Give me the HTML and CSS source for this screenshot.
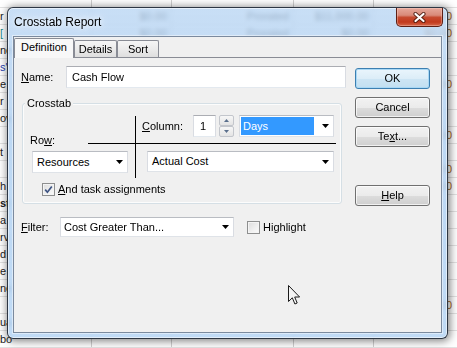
FILE: index.html
```html
<!DOCTYPE html>
<html>
<head>
<meta charset="utf-8">
<title>Crosstab Report</title>
<link rel="stylesheet" href="styles.css">
</head>
<body>
<div class="desktop">
  <div class="sheet">
    <div class="srow head"><span class="c ca"></span><span class="c cb"></span><span class="c cc"></span><span class="c cd"></span><span class="c ce"></span><span class="c cf"></span></div>
    <div class="srow"><span class="c ca">r</span><span class="c cb"></span><span class="c cc">$0.00</span><span class="c cd">Prorated</span><span class="c ce">$11,000.00</span><span class="c cf">$0.00</span></div>
    <div class="srow"><span class="c ca teal">[</span><span class="c cb"></span><span class="c cc">$0.00</span><span class="c cd">Prorated</span><span class="c ce">$0.00</span><span class="c cf">$0.00</span></div>
    <div class="srow"><span class="c ca">ne</span><span class="c cb"></span><span class="c cc">$0.00</span><span class="c cd">Prorated</span><span class="c ce">$0.00</span><span class="c cf"></span></div>
    <div class="srow"><span class="c ca blue">s"</span><span class="c cb"></span><span class="c cc">$0.00</span><span class="c cd">Prorated</span><span class="c ce">$0.00</span><span class="c cf"></span></div>
    <div class="srow"><span class="c ca">e</span><span class="c cb"></span><span class="c cc">$0.00</span><span class="c cd">Prorated</span><span class="c ce">$0.00</span><span class="c cf">$0.00</span></div>
    <div class="srow"><span class="c ca">r</span><span class="c cb"></span><span class="c cc">$0.00</span><span class="c cd">Prorated</span><span class="c ce">$0.00</span><span class="c cf"></span></div>
    <div class="srow"><span class="c ca">ov</span><span class="c cb"></span><span class="c cc">$0.00</span><span class="c cd">Prorated</span><span class="c ce">$0.00</span><span class="c cf"></span></div>
    <div class="srow"><span class="c ca"></span><span class="c cb"></span><span class="c cc">$0.00</span><span class="c cd">Prorated</span><span class="c ce">$0.00</span><span class="c cf">$0.00</span></div>
    <div class="srow"><span class="c ca">t</span><span class="c cb"></span><span class="c cc">$0.00</span><span class="c cd">Prorated</span><span class="c ce">$0.00</span><span class="c cf"></span></div>
    <div class="srow"><span class="c ca"></span><span class="c cb"></span><span class="c cc">$0.00</span><span class="c cd">Prorated</span><span class="c ce">$0.00</span><span class="c cf">$0.00</span></div>
    <div class="srow"><span class="c ca">h</span><span class="c cb"></span><span class="c cc">$0.00</span><span class="c cd">Prorated</span><span class="c ce">$0.00</span><span class="c cf">$0.00</span></div>
    <div class="srow"><span class="c ca bold">st</span><span class="c cb"></span><span class="c cc">$0.00</span><span class="c cd">Prorated</span><span class="c ce">$0.00</span><span class="c cf"></span></div>
    <div class="srow"><span class="c ca">a</span><span class="c cb"></span><span class="c cc">$0.00</span><span class="c cd">Prorated</span><span class="c ce">$0.00</span><span class="c cf"></span></div>
    <div class="srow"><span class="c ca">rv</span><span class="c cb"></span><span class="c cc">$0.00</span><span class="c cd">Prorated</span><span class="c ce">$0.00</span><span class="c cf"></span></div>
    <div class="srow"><span class="c ca">d</span><span class="c cb"></span><span class="c cc">$0.00</span><span class="c cd">Prorated</span><span class="c ce">$0.00</span><span class="c cf"></span></div>
    <div class="srow"><span class="c ca">e</span><span class="c cb"></span><span class="c cc">$0.00</span><span class="c cd">Prorated</span><span class="c ce">$0.00</span><span class="c cf"></span></div>
    <div class="srow"><span class="c ca">ne</span><span class="c cb"></span><span class="c cc">$0.00</span><span class="c cd">Prorated</span><span class="c ce">$0.00</span><span class="c cf"></span></div>
    <div class="srow"><span class="c ca"></span><span class="c cb"></span><span class="c cc">$0.00</span><span class="c cd">Prorated</span><span class="c ce">$0.00</span><span class="c cf">$0.00</span></div>
    <div class="srow"><span class="c ca">ua</span><span class="c cb"></span><span class="c cc">$0.00</span><span class="c cd">Prorated</span><span class="c ce">$0.00</span><span class="c cf"></span></div>
    <div class="srow"><span class="c ca">bo</span><span class="c cb"></span><span class="c cc"></span><span class="c cd"></span><span class="c ce"></span><span class="c cf"></span></div>
  </div>

  <div class="window">
    <div class="titlebar">
      <span class="title">Crosstab Report</span>
      <div class="close">
        <svg width="13" height="11" viewBox="0 0 13 11">
          <path d="M2.5 2 L10.5 9 M10.5 2 L2.5 9" stroke="#3a1208" stroke-opacity="0.75" stroke-width="4.2" stroke-linecap="round"/>
          <path d="M2.5 2 L10.5 9 M10.5 2 L2.5 9" stroke="#ffffff" stroke-width="2.2" stroke-linecap="round"/>
        </svg>
      </div>
    </div>
    <div class="client">
      <div class="tabs">
        <div class="tab sel t-def">Definition</div>
        <div class="tab t-det">Details</div>
        <div class="tab t-sort">Sort</div>
      </div>
      <div class="pane">
        <div class="form">
          <div class="name-row">
            <span class="lbl name-lbl"><u>N</u>ame:</span>
            <div class="textbox">Cash Flow</div>
          </div>

          <div class="group">
            <div class="group-title">Crosstab</div>
            <div class="cross">
              <div class="tl"><span class="row-label">Ro<u>w</u>:</span></div>
              <div class="vline"></div>
              <div class="tr">
                <span class="col-label"><u>C</u>olumn:</span>
                <div class="spin-edit">1</div>
                <div class="spin-btns">
                  <div class="spin-btn"><svg width="5" height="3" viewBox="0 0 5 3"><polygon points="0,3 2.5,0 5,3" fill="#5a6f8c"/></svg></div>
                  <div class="spin-btn"><svg width="5" height="3" viewBox="0 0 5 3"><polygon points="0,0 5,0 2.5,3" fill="#5a6f8c"/></svg></div>
                </div>
                <div class="combo days">
                  <span class="val hl">Days</span>
                  <svg class="arrow" width="7" height="4" viewBox="0 0 7 4"><polygon points="0,0 7,0 3.5,4" fill="#000"/></svg>
                </div>
              </div>
              <div class="hline"></div>
              <div class="bl">
                <div class="combo res">
                  <span class="val">Resources</span>
                  <svg class="arrow" width="7" height="4" viewBox="0 0 7 4"><polygon points="0,0 7,0 3.5,4" fill="#000"/></svg>
                </div>
              </div>
              <div class="br">
                <div class="combo ac">
                  <span class="val">Actual Cost</span>
                  <svg class="arrow" width="7" height="4" viewBox="0 0 7 4"><polygon points="0,0 7,0 3.5,4" fill="#000"/></svg>
                </div>
              </div>
            </div>
            <div class="check-row">
              <span class="checkbox">
                <svg width="11" height="11" viewBox="0 0 11 11"><path d="M2.2 5.6 L4.4 8.2 L8.8 2.4" fill="none" stroke="#3e5483" stroke-width="1.7"/></svg>
              </span>
              <span class="check-lbl"><u>A</u>nd task assignments</span>
            </div>
          </div>

          <div class="filter-row">
            <span class="lbl filter-lbl"><u>F</u>ilter:</span>
            <div class="combo filter">
              <span class="val">Cost Greater Than...</span>
              <svg class="arrow" width="7" height="4" viewBox="0 0 7 4"><polygon points="0,0 7,0 3.5,4" fill="#000"/></svg>
            </div>
            <span class="checkbox hl-check"></span>
            <span class="check-lbl">Hi<u>g</u>hlight</span>
          </div>
        </div>

        <div class="buttons">
          <div class="btn default">OK</div>
          <div class="btn">Cancel</div>
          <div class="btn">Te<u>x</u>t...</div>
          <div class="btn help"><u>H</u>elp</div>
        </div>
      </div>
    </div>
  </div>

  <svg class="cursor" width="13" height="21" viewBox="0 0 13 21">
    <path d="M0.5 0.5 L0.5 16.5 L4.3 12.8 L6.9 19 L9.2 18 L6.7 12 L11.6 12 Z" fill="#f4f4f4" stroke="#1a1a1a" stroke-width="1" stroke-linejoin="miter"/>
  </svg>
</div>
</body>
</html>
```

FILE: styles.css
```css
* {
  box-sizing: border-box;
  margin: 0;
  padding: 0;
}

html, body {
  width: 457px;
  height: 348px;
  overflow: hidden;
}

body {
  font-family: "Liberation Sans", Arial, sans-serif;
  font-size: 11px;
  line-height: 13px;
  color: #000;
  background: #fff;
}

u {
  text-decoration: underline;
  text-underline-offset: 1px;
}

.desktop {
  position: relative;
  width: 457px;
  height: 348px;
  overflow: hidden;
  background: #fff;
}

/* ---------- spreadsheet behind ---------- */
.sheet {
  display: flex;
  flex-direction: column;
}

.srow {
  display: flex;
  height: 17px;
  border-bottom: 1px solid #e2e2e2;
  font-size: 11px;
  line-height: 16px;
}

.srow.head {
  height: 8px;
}

.c {
  flex: none;
  white-space: nowrap;
  overflow: hidden;
  border-right: 1px solid #d0d0d0;
  padding: 0 4px;
  text-align: right;
  color: #222;
}

.ca {
  width: 10px;
  padding: 0;
  text-align: left;
  overflow: visible;
  border-right: none;
}
.cb { width: 82px; }
.cc { width: 80px; }
.cd { width: 122px; }
.ce { width: 80px; }
.cf { width: 83px; padding-right: 5px; color: #a5621c; border-right: none; }

.teal { color: #1a8a8a; }
.blue { color: #1f3fb0; }
.bold { font-weight: bold; }

/* ---------- window ---------- */
.window {
  position: absolute;
  left: 7px;
  top: 7px;
  width: 441px;
  height: 332px;
  display: flex;
  flex-direction: column;
  padding: 0 5px 5px;
  border: 1px solid rgba(25, 32, 42, 0.88);
  border-radius: 6px;
  background: linear-gradient(180deg, rgba(186, 214, 243, 0.8) 0%, rgba(176, 208, 241, 0.84) 40%, rgba(182, 213, 244, 0.86) 100%);
  backdrop-filter: blur(2px);
  box-shadow: 1px 1px 8px 1px rgba(0, 0, 0, 0.5), inset 0 0 0 1px rgba(255, 255, 255, 0.55);
}

.titlebar {
  height: 28px;
  display: flex;
  align-items: center;
  padding-left: 1px;
}

.title {
  font-size: 12px;
  line-height: 28px;
  color: #000;
  text-shadow: 0 0 5px rgba(255, 255, 255, 0.9), 0 0 9px rgba(255, 255, 255, 0.8);
}

.close {
  margin-left: auto;
  margin-right: -1px;
  align-self: flex-start;
  width: 47px;
  height: 19px;
  display: flex;
  align-items: center;
  justify-content: center;
  border: 1px solid #5e1f14;
  border-top: none;
  border-radius: 0 0 5px 5px;
  background: linear-gradient(180deg, #e6a89b 0%, #d98a7a 40%, #c64a30 52%, #c23a1d 78%, #d5684b 100%);
  box-shadow: inset 0 0 0 1px rgba(255, 220, 210, 0.35);
}

.client {
  flex: 1;
  display: flex;
  flex-direction: column;
  background: #f0f0f0;
  border: 1px solid #7b8a9e;
  box-shadow: 0 0 0 1px rgba(255, 255, 255, 0.45);
}

/* ---------- tabs ---------- */
.tabs {
  display: flex;
  align-items: flex-end;
  height: 19px;
  margin-top: 1px;
}

.tab {
  height: 17px;
  border: 1px solid #898c95;
  border-bottom: none;
  border-radius: 2px 2px 0 0;
  background: linear-gradient(180deg, #f5f5f5 0%, #ebebeb 50%, #dedede 100%);
  text-align: center;
  line-height: 16px;
}

.tab.sel {
  height: 20px;
  margin-bottom: -1px;
  background: #f8f8f8;
  line-height: 17px;
  position: relative;
  z-index: 1;
}

.t-def { width: 60px; }
.t-det { width: 43px; }
.t-sort { width: 42px; }

.pane {
  flex: 1;
  display: flex;
  border-top: 1px solid #898c95;
  padding: 8px 0 0 7px;
}

/* ---------- form ---------- */
.form {
  width: 325px;
  display: flex;
  flex-direction: column;
}

.name-row {
  display: flex;
  align-items: center;
  height: 22px;
}

.name-lbl { width: 45px; }

.textbox {
  width: 280px;
  height: 22px;
  padding-left: 5px;
  line-height: 20px;
  background: #fff;
  border: 1px solid;
  border-color: #abadb3 #d9dce2 #e3e9ef #d9dce2;
}

.group {
  width: 320px;
  margin: 15px 0 0 1px;
  padding-bottom: 7px;
  border: 1px solid #d5dfe5;
  border-radius: 3px;
  box-shadow: inset 0 0 0 1px rgba(255, 255, 255, 0.8);
}

.group-title {
  width: fit-content;
  margin: -7px 0 0 2px;
  padding: 0 2px;
  line-height: 13px;
  background: #f0f0f0;
}

.cross {
  display: grid;
  grid-template-columns: 112px 1px 1fr;
  grid-template-rows: 28px 1px 34px;
  margin-top: 5px;
}

.tl {
  grid-row: 1;
  grid-column: 1;
  display: flex;
  align-items: flex-end;
  padding-left: 7px;
}

.row-label { margin-bottom: -4px; }

.vline {
  grid-column: 2;
  grid-row: 1 / 4;
  margin-top: 1px;
  background: #000;
}

.hline {
  grid-column: 1 / 4;
  grid-row: 2;
  margin: 0 5px 0 65px;
  background: #000;
}

.tr {
  grid-row: 1;
  grid-column: 3;
  display: flex;
  align-items: flex-start;
  padding-left: 6px;
}

.col-label {
  width: 51px;
  height: 22px;
  line-height: 22px;
}

.spin-edit {
  width: 23px;
  height: 22px;
  padding-left: 6px;
  line-height: 20px;
  background: #fff;
  border: 1px solid;
  border-color: #abadb3 #d9dce2 #e3e9ef #d9dce2;
}

.spin-btns {
  width: 15px;
  height: 22px;
  margin-left: 3px;
  display: flex;
  flex-direction: column;
}

.spin-btn {
  height: 11px;
  display: flex;
  align-items: center;
  justify-content: center;
  border: 1px solid #c3c6cc;
  border-radius: 2px;
  background: linear-gradient(180deg, #f7f7f7 0%, #e4e4e4 100%);
}

.combo {
  display: flex;
  align-items: center;
  background: #fff;
  border: 1px solid;
  border-color: #b9bcc2 #d9dce2 #dfe3e8 #d9dce2;
}

.combo .val {
  flex: 1;
  padding-left: 4px;
  white-space: nowrap;
}

.combo .arrow {
  flex: none;
  margin: 0 4px 0 0;
}

.combo.days {
  width: 95px;
  height: 22px;
  margin-left: 5px;
}

.combo .val.hl {
  flex: none;
  width: 73px;
  height: 18px;
  margin: 1px;
  padding-left: 2px;
  line-height: 18px;
  color: #fff;
  background: #3399ff;
}

.combo.days .arrow { margin-left: auto; }

.bl {
  grid-row: 3;
  grid-column: 1;
  padding: 7px 0 0 9px;
}

.br {
  grid-row: 3;
  grid-column: 3;
  padding: 7px 0 0 11px;
}

.combo.res { width: 96px; height: 22px; }
.combo.ac { width: 187px; height: 21px; }

.check-row {
  display: flex;
  align-items: center;
  height: 13px;
  margin: 5px 0 0 19px;
}

.checkbox {
  flex: none;
  width: 13px;
  height: 13px;
  display: flex;
  align-items: center;
  justify-content: center;
  border: 1px solid #8e8f8f;
  background: linear-gradient(135deg, #dcdcdc 0%, #f0f0f0 60%, #fbfbfb 100%);
  box-shadow: inset 0 0 0 1px #f4f4f4;
}

.check-lbl { margin-left: 3px; }

.filter-row {
  display: flex;
  align-items: center;
  height: 20px;
  margin-top: 13px;
}

.filter-lbl { width: 39px; }

.combo.filter {
  width: 174px;
  height: 20px;
}

.combo.filter .val { padding-left: 3px; }

.hl-check { margin-left: 13px; }

/* ---------- buttons ---------- */
.buttons {
  width: 75px;
  margin-left: 9px;
  padding-top: 2px;
  display: flex;
  flex-direction: column;
}

.btn {
  height: 21px;
  margin-bottom: 8px;
  text-align: center;
  line-height: 19px;
  border: 1px solid #707070;
  border-radius: 3px;
  background: linear-gradient(180deg, #f2f2f2 0%, #ebebeb 50%, #dddddd 51%, #cfcfcf 100%);
  box-shadow: inset 0 0 0 1px rgba(255, 255, 255, 0.7);
}

.btn.default {
  border-color: #3c7fb1;
  background: linear-gradient(180deg, #eaf5fc 0%, #dcedf8 50%, #cde5f4 51%, #c2dff1 100%);
  box-shadow: inset 0 0 0 1px #a9d8f5;
}

.btn.help { margin-top: 30px; }

/* ---------- mouse pointer ---------- */
.cursor {
  position: absolute;
  left: 288px;
  top: 285px;
}
```
